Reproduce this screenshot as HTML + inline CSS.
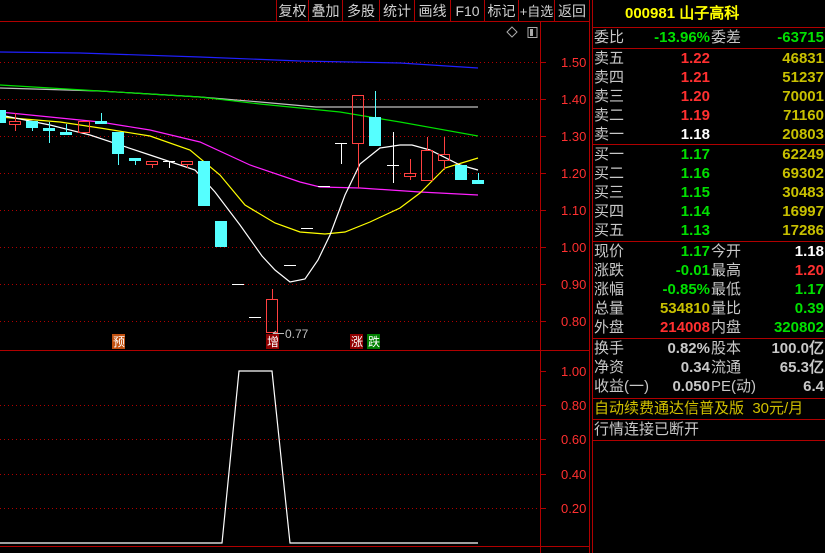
<!DOCTYPE html>
<html><head><meta charset="utf-8"><style>
*{margin:0;padding:0;box-sizing:border-box}
body{width:825px;height:553px;background:#000;overflow:hidden;position:relative;font-family:"Liberation Sans","WenQuanYi Zen Hei",sans-serif;font-size:15px}
#svg{position:absolute;left:0;top:0}
.p{position:absolute;left:593px;width:232px;height:19px;line-height:19px;white-space:nowrap}
.p span{position:absolute;top:0}
.l{left:1px;color:#c8c8c8}
.h{border-top:1px solid #b00000;position:absolute;left:593px;width:232px;height:0}
.w{color:#fff;font-weight:bold}.r{color:#ff3030;font-weight:bold}.g{color:#00e000;font-weight:bold}.y{color:#c8c000;font-weight:bold}.s{color:#c8c8c8;font-weight:bold}
.tb{position:absolute;top:2px;height:19px;line-height:19px;color:#d0d0d0;font-size:14px;text-align:center;white-space:nowrap;overflow:visible}
</style></head><body>
<svg id="svg" width="825" height="553" xmlns="http://www.w3.org/2000/svg" font-family="Liberation Sans, WenQuanYi Zen Hei, sans-serif">
<line x1="0" y1="21.5" x2="590" y2="21.5" stroke="#b00000"/>
<line x1="540.5" y1="22" x2="540.5" y2="553" stroke="#b00000"/>
<line x1="589.5" y1="0" x2="589.5" y2="553" stroke="#b00000"/>
<line x1="592.5" y1="0" x2="592.5" y2="553" stroke="#b00000"/>
<line x1="0" y1="350.5" x2="590" y2="350.5" stroke="#b00000"/>
<line x1="0" y1="546.5" x2="590" y2="546.5" stroke="#b00000"/>
<g stroke="#b00000">
<line x1="276.5" y1="0" x2="276.5" y2="21"/><line x1="308.5" y1="0" x2="308.5" y2="21"/><line x1="342.5" y1="0" x2="342.5" y2="21"/><line x1="379.5" y1="0" x2="379.5" y2="21"/><line x1="414.5" y1="0" x2="414.5" y2="21"/><line x1="450.5" y1="0" x2="450.5" y2="21"/><line x1="484.5" y1="0" x2="484.5" y2="21"/><line x1="518.5" y1="0" x2="518.5" y2="21"/><line x1="554.5" y1="0" x2="554.5" y2="21"/>
</g>
<g stroke="#b00000" stroke-dasharray="1,3">
<line x1="0" y1="62.5" x2="540" y2="62.5"/><line x1="0" y1="99.5" x2="540" y2="99.5"/><line x1="0" y1="136.5" x2="540" y2="136.5"/><line x1="0" y1="173.5" x2="540" y2="173.5"/><line x1="0" y1="210.5" x2="540" y2="210.5"/><line x1="0" y1="247.5" x2="540" y2="247.5"/><line x1="0" y1="284.5" x2="540" y2="284.5"/><line x1="0" y1="321.5" x2="540" y2="321.5"/>
<line x1="0" y1="405.5" x2="540" y2="405.5"/><line x1="0" y1="439.5" x2="540" y2="439.5"/><line x1="0" y1="474.5" x2="540" y2="474.5"/><line x1="0" y1="508.5" x2="540" y2="508.5"/>
</g>
<g stroke="#b00000">
<line x1="540" y1="62.5" x2="546" y2="62.5"/><line x1="540" y1="99.5" x2="546" y2="99.5"/><line x1="540" y1="136.5" x2="546" y2="136.5"/><line x1="540" y1="173.5" x2="546" y2="173.5"/><line x1="540" y1="210.5" x2="546" y2="210.5"/><line x1="540" y1="247.5" x2="546" y2="247.5"/><line x1="540" y1="284.5" x2="546" y2="284.5"/><line x1="540" y1="321.5" x2="546" y2="321.5"/>
<line x1="540" y1="371.5" x2="546" y2="371.5"/><line x1="540" y1="405.5" x2="546" y2="405.5"/><line x1="540" y1="439.5" x2="546" y2="439.5"/><line x1="540" y1="474.5" x2="546" y2="474.5"/><line x1="540" y1="508.5" x2="546" y2="508.5"/>
</g>
<g fill="#ff3030" font-size="13">
<text x="561" y="67">1.50</text><text x="561" y="104">1.40</text><text x="561" y="141">1.30</text><text x="561" y="178">1.20</text><text x="561" y="215">1.10</text><text x="561" y="252">1.00</text><text x="561" y="289">0.90</text><text x="561" y="326">0.80</text>
<text x="561" y="376">1.00</text><text x="561" y="410">0.80</text><text x="561" y="444">0.60</text><text x="561" y="479">0.40</text><text x="561" y="513">0.20</text>
</g>
<path d="M512 27 L517 32 L512 37 L507 32 Z" fill="none" stroke="#aaa"/>
<rect x="528" y="27.5" width="9" height="10" fill="none" stroke="#aaa"/><rect x="530" y="29" width="3" height="7" fill="#aaa"/>
<g fill="none" stroke-width="1.2">
<polyline stroke="#2020ff" points="0,52 80,53 200,57 300,61 400,63 478,68"/>
<polyline stroke="#c0c0c0" points="0,88 100,91 200,97 260,102 316,107 478,107"/>
<polyline stroke="#00e000" points="0,85 100,91 200,97 260,104 340,112 400,122 478,136"/>
<polyline stroke="#ff20ff" points="0,112 60,118 100,122 150,130 200,142 250,165 300,182 320,187 360,188 420,192 478,195"/>
<polyline stroke="#ffff00" points="0,117 60,122 100,128 150,136 190,150 220,175 245,205 275,223 300,232 325,234 345,232 370,222 400,208 420,193 445,168 478,158"/>
<polyline stroke="#ffffff" points="0,115 50,125 90,135 150,155 195,170 215,192 240,225 262,256 275,270 290,282 305,279 318,260 330,235 345,195 360,164 380,148 400,145 412,145 430,150 460,165 478,170"/>
</g>
<g fill="#55ffff">
<rect x="0" y="110" width="6" height="13"/>
<rect x="26" y="121" width="12" height="7"/><rect x="43" y="128" width="12" height="3"/><rect x="60" y="132" width="12" height="3"/><rect x="95" y="121" width="12" height="3"/><rect x="112" y="132" width="12" height="22"/><rect x="129" y="158" width="12" height="3"/><rect x="198" y="161" width="12" height="45"/><rect x="215" y="221" width="12" height="26"/><rect x="369" y="117" width="12" height="29"/><rect x="455" y="165" width="12" height="15"/><rect x="472" y="180" width="12" height="4"/>
</g>
<g stroke="#55ffff"><line x1="49.5" y1="122" x2="49.5" y2="143"/><line x1="66.5" y1="124" x2="66.5" y2="132"/><line x1="101.5" y1="113" x2="101.5" y2="121"/><line x1="118.5" y1="154" x2="118.5" y2="165"/><line x1="135.5" y1="161" x2="135.5" y2="165"/><line x1="375.5" y1="91" x2="375.5" y2="117"/><line x1="478.5" y1="173" x2="478.5" y2="180"/><line x1="32.5" y1="128" x2="32.5" y2="131"/></g>
<g fill="none" stroke="#ff4040">
<rect x="9.5" y="121.5" width="11" height="3"/><line x1="15.5" y1="113" x2="15.5" y2="121"/><line x1="15.5" y1="125" x2="15.5" y2="131"/>
<rect x="78.5" y="121.5" width="11" height="11"/>
<rect x="146.5" y="161.5" width="11" height="3"/><line x1="152.5" y1="165" x2="152.5" y2="168"/>
<rect x="181.5" y="161.5" width="11" height="3"/><line x1="187.5" y1="165" x2="187.5" y2="168"/>
<rect x="266.5" y="299.5" width="11" height="33"/><line x1="272.5" y1="289" x2="272.5" y2="299"/>
<rect x="352.5" y="95.5" width="11" height="48"/><line x1="358.5" y1="144" x2="358.5" y2="188"/>
<rect x="404.5" y="173.5" width="11" height="3"/><line x1="410.5" y1="159" x2="410.5" y2="173"/><line x1="410.5" y1="177" x2="410.5" y2="180"/>
<rect x="421.5" y="150.5" width="11" height="30"/><line x1="427.5" y1="137" x2="427.5" y2="150"/>
<rect x="438.5" y="154.5" width="11" height="6"/><line x1="444.5" y1="137" x2="444.5" y2="154"/><line x1="444.5" y1="161" x2="444.5" y2="170"/>
</g>
<g stroke="#fff">
<line x1="163" y1="161.5" x2="175" y2="161.5"/><line x1="169.5" y1="161" x2="169.5" y2="168"/>
<line x1="232" y1="284.5" x2="244" y2="284.5"/><line x1="249" y1="317.5" x2="261" y2="317.5"/><line x1="284" y1="265.5" x2="296" y2="265.5"/><line x1="301" y1="228.5" x2="313" y2="228.5"/><line x1="318" y1="186.5" x2="330" y2="186.5"/>
<line x1="335" y1="143.5" x2="347" y2="143.5"/><line x1="341.5" y1="143" x2="341.5" y2="164"/>
<line x1="387" y1="165.5" x2="399" y2="165.5"/><line x1="393.5" y1="132" x2="393.5" y2="183"/>
</g>
<path d="M273 333.5 H284 M273 333.5 L276 331 M273 333.5 L276 336" stroke="#c0c0c0" fill="none"/>
<text x="285" y="338" fill="#c0c0c0" font-size="12">0.77</text>
<rect x="112" y="334" width="13" height="15" fill="#c05010"/><text x="113" y="346" fill="#fff" font-size="12">预</text>
<rect x="266" y="334" width="13" height="15" fill="#900000"/><text x="267" y="346" fill="#fff" font-size="12">增</text>
<rect x="350" y="334" width="13" height="15" fill="#900000"/><text x="351" y="346" fill="#fff" font-size="12">涨</text>
<rect x="367" y="334" width="13" height="15" fill="#008000"/><text x="368" y="346" fill="#fff" font-size="12">跌</text>
<polyline fill="none" stroke="#fff" stroke-width="1.2" points="0,543 222,543 239,371 272,371 290,543 478,543"/>
</svg>
<div class="tb" style="left:277px;width:31px">复权</div>
<div class="tb" style="left:309px;width:33px">叠加</div>
<div class="tb" style="left:343px;width:36px">多股</div>
<div class="tb" style="left:380px;width:34px">统计</div>
<div class="tb" style="left:415px;width:35px">画线</div>
<div class="tb" style="left:451px;width:33px">F10</div>
<div class="tb" style="left:485px;width:33px">标记</div>
<div class="tb" style="left:519px;width:35px;font-size:13px">+自选</div>
<div class="tb" style="left:555px;width:34px">返回</div>

<div class="p" style="top:4px"><span style="left:32px;color:#ffff00;font-weight:bold">000981 山子高科</span></div>
<div class="h" style="top:27px"></div>
<div class="p" style="top:28px"><span class="l">委比</span><span class="g" style="right:115px">-13.96%</span><span class="l" style="left:118px">委差</span><span class="g" style="right:1px">-63715</span></div>
<div class="h" style="top:48px"></div>
<div class="p" style="top:49px"><span class="l">卖五</span><span class="r" style="right:115px">1.22</span><span class="y" style="right:1px">46831</span></div>
<div class="p" style="top:68px"><span class="l">卖四</span><span class="r" style="right:115px">1.21</span><span class="y" style="right:1px">51237</span></div>
<div class="p" style="top:87px"><span class="l">卖三</span><span class="r" style="right:115px">1.20</span><span class="y" style="right:1px">70001</span></div>
<div class="p" style="top:106px"><span class="l">卖二</span><span class="r" style="right:115px">1.19</span><span class="y" style="right:1px">71160</span></div>
<div class="p" style="top:125px"><span class="l">卖一</span><span class="w" style="right:115px">1.18</span><span class="y" style="right:1px">20803</span></div>
<div class="h" style="top:144px"></div>
<div class="p" style="top:145px"><span class="l">买一</span><span class="g" style="right:115px">1.17</span><span class="y" style="right:1px">62249</span></div>
<div class="p" style="top:164px"><span class="l">买二</span><span class="g" style="right:115px">1.16</span><span class="y" style="right:1px">69302</span></div>
<div class="p" style="top:183px"><span class="l">买三</span><span class="g" style="right:115px">1.15</span><span class="y" style="right:1px">30483</span></div>
<div class="p" style="top:202px"><span class="l">买四</span><span class="g" style="right:115px">1.14</span><span class="y" style="right:1px">16997</span></div>
<div class="p" style="top:221px"><span class="l">买五</span><span class="g" style="right:115px">1.13</span><span class="y" style="right:1px">17286</span></div>
<div class="h" style="top:241px"></div>
<div class="p" style="top:242px"><span class="l">现价</span><span class="g" style="right:115px">1.17</span><span class="l" style="left:118px">今开</span><span class="w" style="right:1px">1.18</span></div>
<div class="p" style="top:261px"><span class="l">涨跌</span><span class="g" style="right:115px">-0.01</span><span class="l" style="left:118px">最高</span><span class="r" style="right:1px">1.20</span></div>
<div class="p" style="top:280px"><span class="l">涨幅</span><span class="g" style="right:115px">-0.85%</span><span class="l" style="left:118px">最低</span><span class="g" style="right:1px">1.17</span></div>
<div class="p" style="top:299px"><span class="l">总量</span><span class="y" style="right:115px">534810</span><span class="l" style="left:118px">量比</span><span class="g" style="right:1px">0.39</span></div>
<div class="p" style="top:318px"><span class="l">外盘</span><span class="r" style="right:115px">214008</span><span class="l" style="left:118px">内盘</span><span class="g" style="right:1px">320802</span></div>
<div class="h" style="top:338px"></div>
<div class="p" style="top:339px"><span class="l">换手</span><span class="s" style="right:115px">0.82%</span><span class="l" style="left:118px">股本</span><span class="s" style="right:1px">100.0亿</span></div>
<div class="p" style="top:358px"><span class="l">净资</span><span class="s" style="right:115px">0.34</span><span class="l" style="left:118px">流通</span><span class="s" style="right:1px">65.3亿</span></div>
<div class="p" style="top:377px"><span class="l">收益(一)</span><span class="s" style="right:115px">0.050</span><span class="l" style="left:118px">PE(动)</span><span class="s" style="right:1px">6.4</span></div>
<div class="h" style="top:398px"></div>
<div class="p" style="top:399px"><span style="left:1px;color:#d0c000">自动续费通达信普及版&nbsp; 30元/月</span></div>
<div class="h" style="top:419px"></div>
<div class="p" style="top:420px"><span class="l">行情连接已断开</span></div>
<div class="h" style="top:440px"></div>
</body></html>
